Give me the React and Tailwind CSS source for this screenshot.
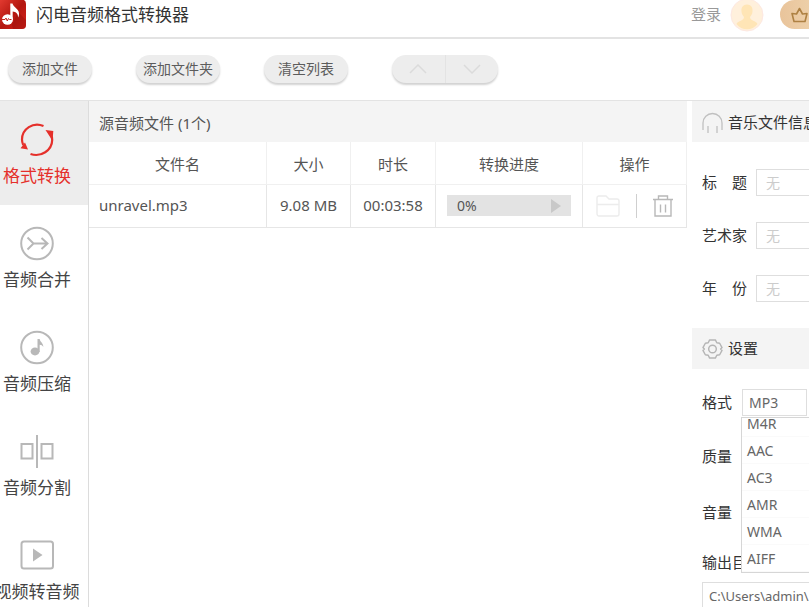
import React, { useState } from "react";

const ConvertIcon = () => (
  <svg width="36" height="36" viewBox="0 0 36 36" fill="none" stroke="currentColor" strokeWidth="2.2">
    <path d="M24.500 5C14 .5 3 8 3 18.500c0 2 .4 3.500 1.200 5.500" />
    <path d="M11.500 33C22 36.500 33 29.500 33.200 19c0-2-.4-4-1.200-5.500" />
    <path d="M26.500 9l7.800 1-.5 6.500-1.800 1zM6 21.500l3 7-7.500-1.300z" fill="currentColor" stroke="none" />
  </svg>
);

const MergeIcon = () => (
  <svg width="36" height="36" viewBox="0 0 36 36" fill="none" stroke="currentColor" strokeWidth="2">
    <circle cx="18" cy="18.500" r="15.800" />
    <path d="M8.500 12.500l6 6-6 6M14.500 18.500H28M22.500 13l6 5.500-6 5.500" />
  </svg>
);

const CompressIcon = () => (
  <svg width="36" height="36" viewBox="0 0 36 36" fill="none" stroke="currentColor" strokeWidth="2">
    <circle cx="18" cy="18.500" r="15.800" />
    <ellipse cx="16" cy="22.500" rx="4.400" ry="3.900" fill="currentColor" stroke="none" />
    <path d="M18.500 23V10h2.200c.3 3 3.800 3.800 3.600 8-.8-1.500-2-2.200-3.600-2.300V23z" fill="currentColor" stroke="none" />
  </svg>
);

const SplitIcon = () => (
  <svg width="36" height="36" viewBox="0 0 36 36" fill="none" stroke="currentColor" strokeWidth="2">
    <path d="M2.500 11h11v14.500h-11zM22.500 11h11v14.500h-11zM18 2v33" />
  </svg>
);

const VideoIcon = () => (
  <svg width="36" height="36" viewBox="0 0 36 36" fill="none" stroke="currentColor" strokeWidth="2">
    <rect x="2.500" y="4.500" width="31.500" height="27" rx="2.500" />
    <path d="M14 11.500v13l9.500-6.500z" fill="currentColor" stroke="none" />
  </svg>
);

const tools = [
  { label: "格式转换", Icon: ConvertIcon },
  { label: "音频合并", Icon: MergeIcon },
  { label: "音频压缩", Icon: CompressIcon },
  { label: "音频分割", Icon: SplitIcon },
  { label: "视频转音频", Icon: VideoIcon },
];

const files = [{ name: "unravel.mp3", size: "9.08 MB", time: "00:03:58", progress: 0 }];

const formats = ["M4R", "AAC", "AC3", "AMR", "WMA", "AIFF"];

const Header = () => (
  <header className="flex h-[39px] shrink-0 items-start border-b-2 border-[#e3e3e3]">
    <div className="flex h-[29px] min-w-0 flex-1 items-center gap-[10px]">
      <svg width="26" height="29" viewBox="0 0 26 29" className="shrink-0">
        <defs>
          <linearGradient id="logo" x1="0" y1="0" x2="1" y2="1">
            <stop offset="0" stopColor="#e23a30" />
            <stop offset="0.5" stopColor="#b3160f" />
            <stop offset="1" stopColor="#d8231c" />
          </linearGradient>
        </defs>
        <path d="M0 0h24q2 1 2 4v21q0 4-4 4H0z" fill="url(#logo)" />
        <path d="M12 25L18 12l8 8v5q0 4-4 4h-9z" fill="#8d0d08" opacity="0.4" />
        <ellipse cx="7.500" cy="19.500" rx="5.500" ry="5.200" fill="#fff" />
        <path d="M10.300 20V3.500h2.200c.8 4 6.500 5 6.500 10 .1 1.500-.3 3-1 4 .3-4-2-5.500-5.300-6V20z" fill="#fff" />
        <path d="M2 19.500h3l1-1.500 1.300 3 1.200-2.500 1 1h2" fill="none" stroke="#c3241c" />
      </svg>
      <h1 className="truncate text-[17px] text-[#333]">闪电音频格式转换器</h1>
    </div>
    <div className="flex h-[29px] shrink-0 items-center">
      <button className="text-[15px] text-[#999]">登录</button>
      <svg width="34" height="34" viewBox="0 0 34 34" className="ml-[9px]">
        <circle cx="17" cy="17" r="16" fill="#fff0dc" stroke="#fde8e2" />
        <path
          d="M17 6.500c4 0 6 3 5.500 7-.2 3-1.500 4-2.500 5.500 0 4 6 3.500 7.500 7-5 7-16 7-21 0 1.500-3.500 7.500-3 7.500-7-1-1.500-2.300-2.500-2.500-5.500-.5-4 1.500-7 5.500-7z"
          fill="#ffe5b6"
        />
      </svg>
      <button
        aria-label="会员"
        className="ml-4 flex h-[29px] w-[29px] items-center justify-end rounded-l-full bg-gradient-to-r from-[#e9c49b] to-[#edcfa8]"
      >
        <svg width="19" height="18" viewBox="0 0 19 18" fill="none" stroke="#ae8143" strokeWidth="1.6">
          <path d="M4 15.500L2 7.500l4.500.5L9.500 2.500 12.500 8l4.500-.5-2 8z" strokeLinejoin="round" />
        </svg>
      </button>
    </div>
  </header>
);

const Toolbar = () => (
  <div className="flex h-[62px] shrink-0 items-center gap-[44px] border-b border-[#e3e3e3] px-2 pb-[2px]">
    {["添加文件", "添加文件夹", "清空列表"].map((label) => (
      <button
        key={label}
        className="h-[28px] w-[84px] rounded-full bg-[#ededed] text-[14px] whitespace-nowrap text-[#5c5c5c] shadow-[0_2px_2px_#d2d2d2]"
      >
        {label}
      </button>
    ))}
    <div className="flex h-[28px] w-[106px] divide-x divide-[#e3e3e3] overflow-hidden rounded-full bg-[#ededed] shadow-[0_2px_2px_#d2d2d2]">
      <button aria-label="上移" className="flex flex-1 items-center justify-center">
        <svg width="18" height="10" viewBox="0 0 18 10" fill="none" stroke="#dbdbdb" strokeWidth="1.5">
          <path d="M1 9l8-8 8 8" />
        </svg>
      </button>
      <button aria-label="下移" className="flex flex-1 items-center justify-center">
        <svg width="18" height="10" viewBox="0 0 18 10" fill="none" stroke="#dbdbdb" strokeWidth="1.5">
          <path d="M1 1l8 8 8-8" />
        </svg>
      </button>
    </div>
  </div>
);

const Sidebar = ({ active, onSelect }) => (
  <nav className="w-[89px] shrink-0 overflow-hidden border-r border-[#dcdcdc]">
    {tools.map(({ label, Icon }) => (
      <button
        key={label}
        onClick={() => onSelect(label)}
        className={`flex h-[104px] w-full flex-col items-center pt-5 pr-[14px] ${
          active === label ? "bg-[#ededed] text-[#e5302b]" : "text-[#b8b8b8]"
        }`}
      >
        <Icon />
        <span
          className={`mt-[7px] text-[17px] leading-6 whitespace-nowrap ${
            active === label ? "text-[#e5302b]" : "text-[#444]"
          }`}
        >
          {label}
        </span>
      </button>
    ))}
  </nav>
);

const FileTable = () => (
  <main className="min-w-0 flex-1">
    <h2 className="h-[41px] bg-[#f4f4f4] px-[10px] text-[15px] leading-[44px] text-[#555]">
      源音频文件 ({files.length}个)
    </h2>
    <table className="w-full table-fixed border-collapse text-[15px] text-[#555]">
      <thead>
        <tr className="h-[42px] border-b border-[#f0f0f0]">
          <th className="border-r border-[#f0f0f0] pt-[2px] font-normal">文件名</th>
          <th className="w-[84px] border-r border-[#f0f0f0] pt-[2px] font-normal">大小</th>
          <th className="w-[85px] border-r border-[#f0f0f0] pt-[2px] font-normal">时长</th>
          <th className="w-[147px] border-r border-[#f0f0f0] pt-[2px] font-normal">转换进度</th>
          <th className="w-[104px] border-r border-[#f0f0f0] pt-[2px] font-normal">操作</th>
        </tr>
      </thead>
      <tbody>
        {files.map((file) => (
          <tr key={file.name} className="h-[43px] border-b border-[#e6e6e6]">
            <td className="border-r border-[#e6e6e6] px-[10px]">{file.name}</td>
            <td className="border-r border-[#e6e6e6] text-center">{file.size}</td>
            <td className="border-r border-[#e6e6e6] text-center">{file.time}</td>
            <td className="border-r border-[#e6e6e6] px-[11px]">
              <div className="flex h-[21px] items-center justify-between bg-[#e3e3e3] px-[10px] text-[14px]">
                <span>{file.progress}%</span>
                <button aria-label="开始转换">
                  <svg width="10" height="14" viewBox="0 0 10 14" fill="#c8c8c8">
                    <path d="M0 0v14l10-7z" />
                  </svg>
                </button>
              </div>
            </td>
            <td className="border-r border-[#e6e6e6]">
              <div className="flex items-center justify-center gap-4">
                <button aria-label="打开文件夹">
                  <svg width="24" height="22" viewBox="0 0 24 22" fill="none" stroke="#ececec" strokeWidth="1.4">
                    <path d="M1 18.500V3Q1 1 3 1h7l3 3h8q2 0 2 2v13q0 2-2 2H3q-2 0-2-2.500zM1 9.500h22" />
                  </svg>
                </button>
                <span className="h-[24px] w-px bg-[#cfcfcf]" />
                <button aria-label="删除">
                  <svg width="20" height="22" viewBox="0 0 20 22" fill="none" stroke="#b8b8b8" strokeWidth="1.4">
                    <path d="M0 4.500h20M5.500 4.500V1h9v3.500M2 4.500V21h16V4.500M7.500 9.500v8M12.500 9.500v8" />
                  </svg>
                </button>
              </div>
            </td>
          </tr>
        ))}
      </tbody>
    </table>
  </main>
);

const InfoField = ({ id, label }) => (
  <div className="flex h-[27px] items-center">
    <label htmlFor={id} className="w-[54px] shrink-0 text-[15px] whitespace-pre text-[#333]">
      {label}
    </label>
    <input
      id={id}
      placeholder="无"
      className="h-full w-[180px] shrink-0 border border-[#dedede] px-[9px] text-[14px] outline-none placeholder:text-[#ccc]"
    />
  </div>
);

const SettingsPanel = () => {
  const [format, setFormat] = useState("MP3");

  return (
    <aside className="ml-[5px] w-[117px] shrink-0 overflow-hidden whitespace-nowrap">
      <h2 className="flex h-[41px] items-center gap-[5px] bg-[#f4f4f4] pt-[2px] pl-[10px] text-[15px] text-[#333]">
        <svg width="21" height="21" viewBox="0 0 21 21" fill="none" stroke="#c0c0c0" strokeWidth="1.3" className="shrink-0">
          <path d="M1 18v-7a9.500 9.500 0 0 1 19 0v7M6 14v7M15 14v7" />
        </svg>
        音乐文件信息
      </h2>
      <div className="flex flex-col gap-[26px] pt-[27px] pb-[26px] pl-[10px]">
        <InfoField id="title" label="标　题" />
        <InfoField id="artist" label="艺术家" />
        <InfoField id="year" label="年　份" />
      </div>

      <h2 className="flex h-[41px] items-center gap-[5px] bg-[#f4f4f4] pl-[10px] text-[15px] text-[#333]">
        <svg width="21" height="22" viewBox="0 0 22 22" fill="none" stroke="#b5b5b5" strokeWidth="1.5" className="shrink-0">
          <path
            d="M8 1.500h6l1.500 3 3 .5L21 9.500 19.500 11l1.500 1.500-2.500 4.500-3 .5-1.500 3H8l-1.500-3-3-.5L1 12.500 2.500 11 1 9.500 3.500 5l3-.5z"
            strokeLinejoin="round"
          />
          <circle cx="11" cy="11" r="4" />
        </svg>
        设置
      </h2>
      <div className="pt-[20px] pl-[10px] text-[15px] text-[#333]">
        <div className="relative flex h-[27px] items-center">
          <label htmlFor="format" className="w-10 shrink-0">
            格式
          </label>
          <select
            id="format"
            value={format}
            onChange={(e) => setFormat(e.target.value)}
            className="h-full w-[65px] shrink-0 appearance-none border border-[#dedede] bg-white px-[6px] text-[14px] text-[#666]"
          >
            {["MP3", ...formats].map((name) => (
              <option key={name}>{name}</option>
            ))}
          </select>
          <div className="absolute top-full left-[39px] z-10 mt-px h-[156px] w-[120px] overflow-hidden border border-[#d6d6d6] bg-white">
            <ul className="-mt-2">
              {formats.map((name) => (
                <li key={name} className="border-b border-[#fafafa]">
                  <button
                    onClick={() => setFormat(name)}
                    className="block h-[26px] w-full px-[5px] text-left text-[14px] text-[#666]"
                  >
                    {name}
                  </button>
                </li>
              ))}
            </ul>
          </div>
        </div>
        <p className="mt-[28px] leading-6">质量</p>
        <p className="mt-8 leading-6">音量</p>
        <label htmlFor="output" className="mt-[26px] block leading-6">
          输出目录
        </label>
        <input
          id="output"
          defaultValue="C:\Users\admin\Desktop"
          className="mt-2 h-[27px] w-[220px] border border-[#dedede] px-[6px] text-[13px] text-[#666] outline-none"
        />
      </div>
    </aside>
  );
};

const App = () => {
  const [active, setActive] = useState("格式转换");

  return (
    <div className="flex h-screen flex-col overflow-hidden bg-white font-['Noto_Sans','Noto_Sans_CJK_SC',sans-serif]">
      <Header />
      <Toolbar />
      <div className="flex min-h-0 flex-1">
        <Sidebar active={active} onSelect={setActive} />
        <FileTable />
        <SettingsPanel />
      </div>
    </div>
  );
};

export default App;
